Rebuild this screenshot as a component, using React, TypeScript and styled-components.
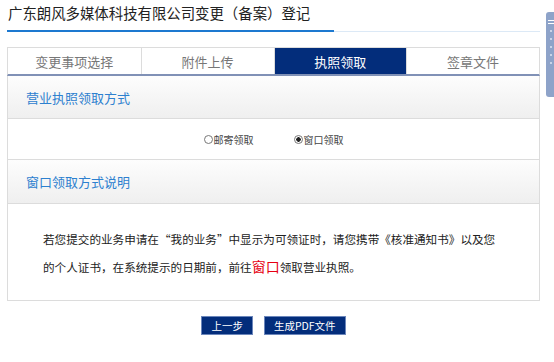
import styled, { createGlobalStyle } from "styled-components";

const GlobalStyle = createGlobalStyle`
  html, body {
    margin: 0;
    padding: 0;
    background: #fff;
  }
  body {
    font-family: "Noto Sans CJK SC", "Liberation Sans", sans-serif;
    color: #333;
  }
`;

const tabs = ["变更事项选择", "附件上传", "执照领取", "签章文件"];
const activeTab = 2;

export default function App() {
  return (
    <>
      <GlobalStyle />
      <Page>
        <Heading>
          <HeadingText>广东朗风多媒体科技有限公司变更（备案）登记</HeadingText>
        </Heading>
        <TabRow>
          {tabs.map((t, i) => (
            <Tab key={t} $active={i === activeTab}>
              {t}
            </Tab>
          ))}
        </TabRow>
        <Panel>
          <SectionHeader>营业执照领取方式</SectionHeader>
          <RadioRow>
            <RadioLabel>
              <RadioDot />
              邮寄领取
            </RadioLabel>
            <RadioLabel>
              <RadioDot $checked />
              窗口领取
            </RadioLabel>
          </RadioRow>
          <SectionHeader $tall>窗口领取方式说明</SectionHeader>
          <Notice>
            <p>
              若您提交的业务申请在“我的业务”中显示为可领证时，请您携带《核准通知书》以及您的个人证书，在系统提示的日期前，前往
              <Highlight>窗口</Highlight>领取营业执照。
            </p>
          </Notice>
        </Panel>
        <Actions>
          <Button>上一步</Button>
          <Button>生成PDF文件</Button>
        </Actions>
      </Page>
      <SideTab>
        <SideGrip />
        <SideGrip />
        <SideDots />
      </SideTab>
    </>
  );
}

const Page = styled.div`
  width: 533px;
  padding: 0 0 20px 7px;
`;

const Heading = styled.div`
  display: flex;
  border-bottom: 1px solid #dce9f6;
`;

const HeadingText = styled.div`
  width: 326px;
  padding: 3px 0 7px 1px;
  margin-bottom: -1px;
  border-bottom: 2px solid #1d79d0;
  font-size: 14.4px;
  line-height: 20px;
  color: #222;
  white-space: nowrap;
`;

const TabRow = styled.div`
  margin-top: 15px;
  display: grid;
  grid-template-columns: repeat(4, 1fr);
  border: 1px solid #dcdcdc;
  border-bottom: 2px solid #8091b6;
`;

const Tab = styled.div<{ $active?: boolean }>`
  height: 26px;
  display: flex;
  align-items: center;
  justify-content: center;
  font-size: 13px;
  color: ${(p) => (p.$active ? "#fff" : "#777")};
  background: ${(p) => (p.$active ? "#032d7b" : "#fff")};
  & + & {
    border-left: 1px solid #dcdcdc;
  }
`;

const Panel = styled.div`
  border: 1px solid #dcdcdc;
  border-top: none;
`;

const SectionHeader = styled.div<{ $tall?: boolean }>`
  height: ${(p) => (p.$tall ? "43px" : "42px")};
  display: flex;
  align-items: center;
  padding-left: 18px;
  font-size: 13px;
  color: #2d80cf;
  background: linear-gradient(#fdfdfd, #efefef);
  border-bottom: 1px solid #dcdcdc;
`;

const RadioRow = styled.div`
  height: 40px;
  display: flex;
  align-items: center;
  justify-content: center;
  gap: 40px;
  border-bottom: 1px solid #dcdcdc;
`;

const RadioLabel = styled.label`
  display: flex;
  align-items: center;
  font-size: 10px;
  color: #444;
`;

const RadioDot = styled.span<{ $checked?: boolean }>`
  width: 7px;
  height: 7px;
  border: 1px solid #777;
  border-radius: 50%;
  margin-right: 1px;
  background: ${(p) =>
    p.$checked ? "radial-gradient(circle, #222 0 2px, #fff 2.5px)" : "#fff"};
`;

const Notice = styled.div`
  height: 96px;
  padding: 0 35px;
  display: flex;
  align-items: center;
  p {
    margin: 0;
    font-size: 11.6px;
    line-height: 27px;
    color: #222;
    padding-top: 2px;
  }
`;

const Highlight = styled.span`
  color: #e60012;
  font-size: 14px;
`;

const Actions = styled.div`
  display: flex;
  justify-content: center;
  gap: 11px;
  margin-top: 15px;
`;

const Button = styled.button`
  height: 19px;
  padding: 0 9px;
  min-width: 49px;
  border: 1px solid #6b86bb;
  background: #032d7b;
  color: #fff;
  font-family: inherit;
  font-size: 10.5px;
  line-height: 17px;
`;

const SideTab = styled.div`
  position: absolute;
  top: 12px;
  left: 546px;
  width: 10px;
  height: 85px;
  background: #8ea3c9;
  border-radius: 3px 0 0 3px;
  padding-top: 8px;
  box-sizing: border-box;
  display: flex;
  flex-direction: column;
  align-items: center;
  gap: 2px;
`;

const SideGrip = styled.div`
  width: 6px;
  height: 1px;
  background: #fff;
`;

const SideDots = styled.div`
  margin-top: 4px;
  width: 2px;
  height: 40px;
  background: repeating-linear-gradient(#c9d4e8 0 2px, transparent 2px 8px);
`;
